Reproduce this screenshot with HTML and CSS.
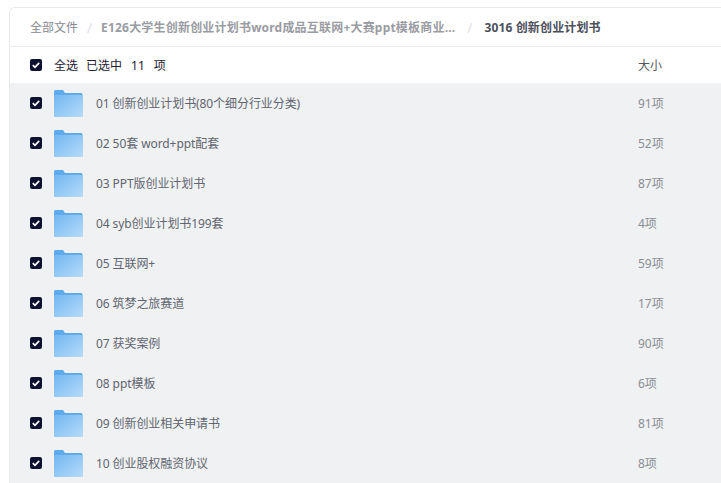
FILE: index.html
```html
<!DOCTYPE html>
<html lang="zh-CN">
<head>
<meta charset="utf-8">
<title>3016 创新创业计划书</title>
<link rel="stylesheet" href="styles.css">
</head>
<body>
<svg class="defs" width="0" height="0" aria-hidden="true">
  <defs>
    <linearGradient id="fg" x1="0" y1="0" x2="1" y2="1">
      <stop offset="0" stop-color="#73b7f0"/>
      <stop offset="1" stop-color="#b4dbfb"/>
    </linearGradient>
    <symbol id="folder" viewBox="0 0 29 27">
      <path d="M0 1.500Q0 0 1.500 0H9L11 3H27.500Q28.500 3 28.500 4.500V8H0Z" fill="#5fabe9"/>
      <path d="M0 5H28Q29 5 29 6V26Q29 27 28 27H1Q0 27 0 26Z" fill="url(#fg)"/>
    </symbol>
    <symbol id="check" viewBox="0 0 12 12">
      <rect width="12" height="12" rx="2" fill="#0e1230"/>
      <path d="M2.800 6.200 5 8.300 9.200 3.900" fill="none" stroke="#fff" stroke-width="1.700"/>
    </symbol>
  </defs>
</svg>
<main class="panel">
  <nav class="crumbs">
    <span class="crumb-root">全部文件</span>
    <span class="sep">/</span>
    <span class="crumb-mid">E126大学生创新创业计划书word成品互联网+大赛ppt模板商业...</span>
    <span class="sep sep-wide">/</span>
    <span class="crumb-cur">3016 创新创业计划书</span>
  </nav>
  <div class="head">
    <svg class="box"><use href="#check"/></svg>
    <span class="all">全选</span>
    <span class="count">已选中<b>11</b>项</span>
    <span class="size-title">大小</span>
  </div>
  <ul class="list">
    <li class="row"><svg class="box"><use href="#check"/></svg><svg class="folder"><use href="#folder"/></svg><span class="name">01 创新创业计划书(80个细分行业分类)</span><span class="size">91项</span></li>
    <li class="row"><svg class="box"><use href="#check"/></svg><svg class="folder"><use href="#folder"/></svg><span class="name">02 50套 word+ppt配套</span><span class="size">52项</span></li>
    <li class="row"><svg class="box"><use href="#check"/></svg><svg class="folder"><use href="#folder"/></svg><span class="name">03 PPT版创业计划书</span><span class="size">87项</span></li>
    <li class="row"><svg class="box"><use href="#check"/></svg><svg class="folder"><use href="#folder"/></svg><span class="name">04 syb创业计划书199套</span><span class="size">4项</span></li>
    <li class="row"><svg class="box"><use href="#check"/></svg><svg class="folder"><use href="#folder"/></svg><span class="name">05 互联网+</span><span class="size">59项</span></li>
    <li class="row"><svg class="box"><use href="#check"/></svg><svg class="folder"><use href="#folder"/></svg><span class="name">06 筑梦之旅赛道</span><span class="size">17项</span></li>
    <li class="row"><svg class="box"><use href="#check"/></svg><svg class="folder"><use href="#folder"/></svg><span class="name">07 获奖案例</span><span class="size">90项</span></li>
    <li class="row"><svg class="box"><use href="#check"/></svg><svg class="folder"><use href="#folder"/></svg><span class="name">08 ppt模板</span><span class="size">6项</span></li>
    <li class="row"><svg class="box"><use href="#check"/></svg><svg class="folder"><use href="#folder"/></svg><span class="name">09 创新创业相关申请书</span><span class="size">81项</span></li>
    <li class="row"><svg class="box"><use href="#check"/></svg><svg class="folder"><use href="#folder"/></svg><span class="name">10 创业股权融资协议</span><span class="size">8项</span></li>
  </ul>
</main>
</body>
</html>
```
FILE: styles.css
```css
html, body {
  margin: 0;
  height: 483px;
  overflow: hidden;
  background: #fff;
}
body {
  padding: 7px 0 0 9px;
  box-sizing: border-box;
  font-family: "Noto Sans", "Noto Sans CJK SC", sans-serif;
  font-size: 12px;
}
.defs { position: absolute; }
.panel {
  border: 1px solid #e8e9eb;
  border-right: 0;
  border-bottom: 0;
  border-top-left-radius: 6px;
}
.crumbs {
  height: 39px;
  box-sizing: border-box;
  border-bottom: 1px solid #e8e9eb;
  display: flex;
  align-items: center;
  padding-left: 20px;
  white-space: nowrap;
}
.crumb-root { color: #85888f; }
.sep { color: #dfe1e4; width: 33px; text-align: center; font-size: 14px; margin: 0 -5px; }
.sep-wide { width: 39px; }
.crumb-mid { color: #9a9ca3; font-weight: 700; letter-spacing: 0.2px; }
.crumb-cur { color: #4c4f5b; font-weight: 700; letter-spacing: 0.15px; }
.head {
  height: 36px;
  display: flex;
  align-items: center;
  padding-left: 20px;
  color: #1d2033;
}
.box { width: 12px; height: 12px; flex: none; }
.all { margin-left: 12px; }
.count { margin-left: 8px; }
.count b { font-weight: 400; margin: 0 9px 0 9px; }
.size-title { margin-left: auto; width: 83px; color: #555862; }
.list {
  list-style: none;
  margin: 0;
  padding: 0;
  background: #eff1f3;
}
.row {
  height: 40px;
  display: flex;
  align-items: center;
  padding-left: 20px;
}
.folder { width: 29px; height: 27px; margin-left: 12px; flex: none; }
.name { margin-left: 13px; color: #62656f; flex: 1; white-space: nowrap; letter-spacing: -0.08px; }
.size { width: 83px; color: #8b8e95; letter-spacing: -0.05px; }
```
